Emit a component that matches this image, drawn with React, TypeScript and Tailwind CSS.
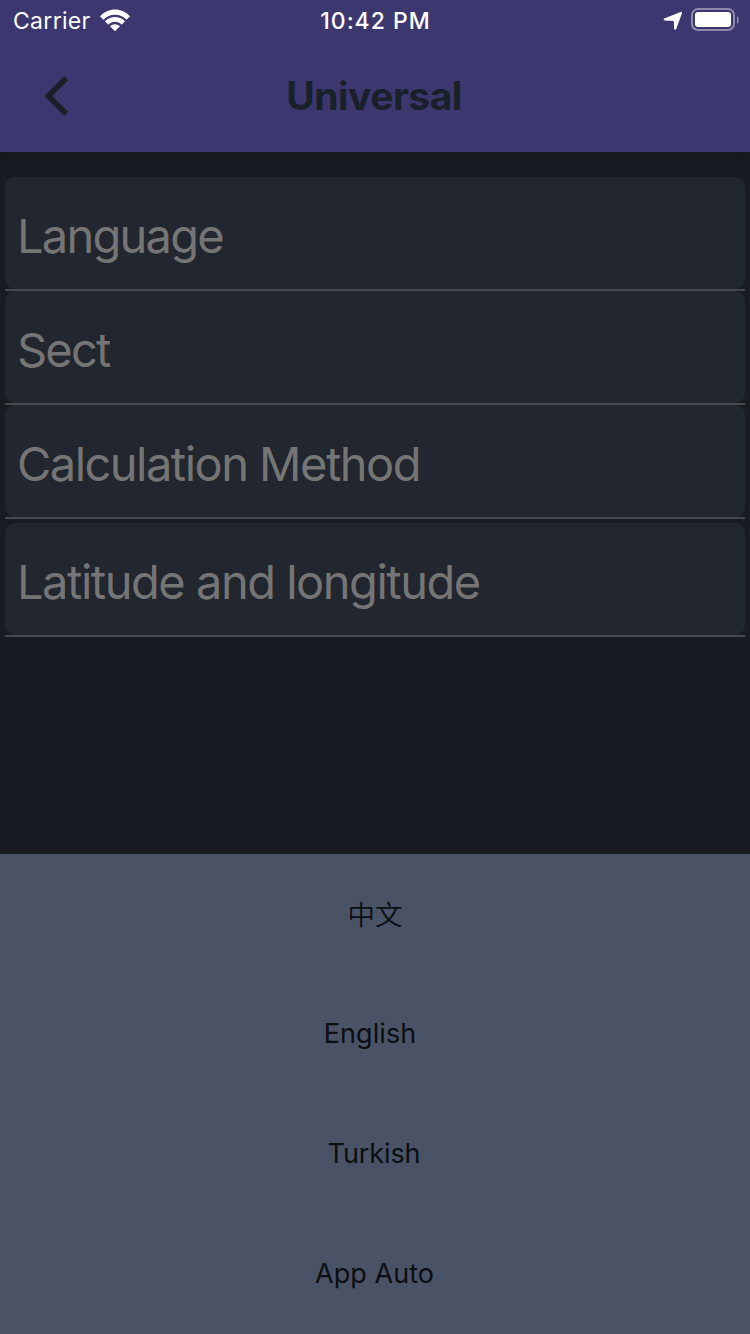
const fields = [
  { label: "Language", style: "tracking-[-1.75px]", gap: "" },
  { label: "Sect", style: "tracking-[-1.8px]", gap: "" },
  { label: "Calculation Method", style: "tracking-[-1.53px]", gap: "" },
  { label: "Latitude and longitude", style: "tracking-[-1.48px]", gap: "mt-1" },
];

const options = [
  { label: "中文", style: "pt-[3px] text-[27.5px] font-[350]" },
  { label: "English", style: "tracking-[0.1px] pr-[10px] pb-0.5" },
  { label: "Turkish", style: "tracking-[-0.1px] pr-0.5 pb-0.5" },
  { label: "App Auto", style: "tracking-[0.05px] pr-px pb-0.5" },
];

function StatusBar() {
  return (
    <div className="grid h-10 grid-cols-3 items-center text-[23px] leading-none text-white">
      <div className="flex items-center gap-[9px] pl-[13px]">
        <span className="pt-0.5 tracking-[0.3px]">Carrier</span>
        <svg width="30" height="22" viewBox="0 0 30 22" fill="white">
          <path d="M0 7.2C8.3-1.8 21.7-1.8 30 7.2L26.6 10.7C20.2 4 9.8 4 3.4 10.7z" />
          <path d="M5 12.2c5.6-5.6 14.4-5.6 20 0L21.7 15.7c-4-3.8-9.4-3.8-13.4 0z" />
          <path d="M10 17.3c2.8-2.7 7.2-2.7 10 0L15 22.2z" />
        </svg>
      </div>
      <span className="pt-0.5 pl-px text-center font-medium tracking-[0.98px]">10:42 PM</span>
      <div className="flex items-center justify-end gap-[8px] pr-[11px]">
        <svg width="20" height="20" viewBox="0 0 20 20" fill="white">
          <path d="M1.2 8.6 17.6 2q1.9-.5 1.3 1.4l-5.6 15.4q-1 1.9-2.2.2L10.8 10.9 1.6 10.4Q-.1 9.6 1.2 8.6z" />
        </svg>
        <svg width="48" height="24" viewBox="0 0 48 24">
          <rect x="1" y="1" width="42" height="21" rx="6" fill="none" stroke="white" strokeOpacity=".42" strokeWidth="2" />
          <rect x="4" y="4" width="36" height="15" rx="3" fill="white" />
          <path d="M46 8c2.2 1.3 2.2 6.7 0 8z" fill="white" fillOpacity=".42" />
        </svg>
      </div>
    </div>
  );
}

export default function App() {
  return (
    <div className="flex h-[1334px] w-[750px] flex-col overflow-hidden bg-[#181b22] font-[Inter,'Noto_Sans_CJK_SC',sans-serif]">
      <header className="z-10 h-[152px] shrink-0 bg-[#3c376f] shadow-[0_2px_10px_rgba(22,24,22,0.9)]">
        <StatusBar />
        <div className="grid h-28 grid-cols-[112px_1fr_112px] items-center text-[#18212a]">
          <button aria-label="Back" className="flex justify-center">
            <svg width="26" height="40" viewBox="0 0 26 40" fill="none" stroke="currentColor" strokeWidth="5.8">
              <path d="M23.2 2.2 5.3 20l17.9 17.8" />
            </svg>
          </button>
          <h1 className="pr-0.5 pb-px text-center text-[39px] leading-none font-bold tracking-[-0.5px]">Universal</h1>
        </div>
      </header>

      <main className="flex-1 px-[5px] pt-[25px]">
        {fields.map((f) => (
          <div key={f.label} className={`border-b-2 border-[#48494c] ${f.gap}`}>
            <div className={`flex h-28 items-center rounded-[10px] bg-[#22262e] pt-1 pl-3 text-[47px] leading-none text-[#757575] ${f.style}`}>
              {f.label}
            </div>
          </div>
        ))}
      </main>

      <ul className="h-[480px] shrink-0 bg-[#4a5265] text-[27px] leading-none text-[#0b0e12]">
        {options.map((o) => (
          <li key={o.label} className={`flex h-[120px] items-center justify-center ${o.style}`}>
            {o.label}
          </li>
        ))}
      </ul>
    </div>
  );
}
